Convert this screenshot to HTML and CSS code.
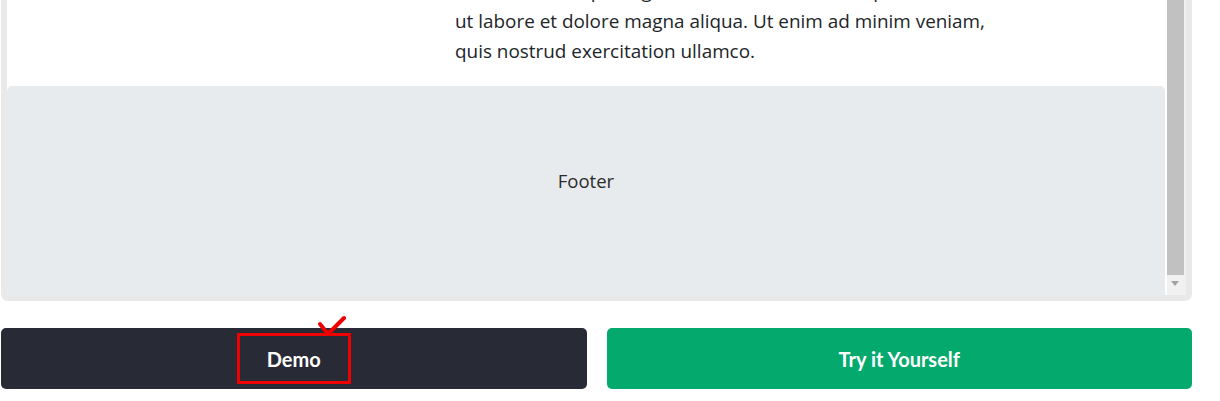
FILE: index.html
```html
<!DOCTYPE html>
<html lang="en">
<head>
<meta charset="utf-8">
<title>Demo</title>
<link rel="stylesheet" href="styles.css">
</head>
<body>
<div class="page">
  <div class="frame">
    <div class="viewport">
      <div class="doc">
        <p class="text">consectetur adipiscing elit, sed do eiusmod tempor incididunt<br>ut labore et dolore magna aliqua. Ut enim ad minim veniam,<br>quis nostrud exercitation ullamco.</p>
        <footer class="footer">Footer</footer>
      </div>
    </div>
    <div class="scrollbar">
      <div class="thumb"></div>
      <div class="arrow"></div>
    </div>
  </div>
  <div class="buttons">
    <a class="btn btn-dark">
      <span class="mark">Demo
        <svg class="check" width="28" height="22" viewBox="0 0 28 22"><polyline points="2,9 10,19 26,3" fill="none" stroke="#ee0000" stroke-width="4" stroke-linecap="round" stroke-linejoin="round"/></svg>
      </span>
    </a>
    <a class="btn btn-green">Try it Yourself</a>
  </div>
</div>
</body>
</html>
```
FILE: styles.css
```css
html, body {
  margin: 0;
  padding: 0;
  background: #ffffff;
}
.page {
  width: 1191px;
  padding-left: 1px;
}
.frame {
  display: flex;
  height: 301px;
  box-sizing: border-box;
  border: 6px solid #e9e9e9;
  border-top: 0;
  border-radius: 0 0 7px 7px;
  background: #ffffff;
  overflow: hidden;
}
.viewport {
  flex: 1;
  overflow: hidden;
  height: 295px;
}
.doc {
  margin-top: -24px;
}
.text {
  margin: 0 0 20px 0;
  padding-left: 448px;
  font-family: "Open Sans", "Noto Sans", sans-serif;
  font-size: 18.9px;
  line-height: 30px;
  color: #212529;
  white-space: nowrap;
}
.footer {
  margin-right: 2px;
  height: 240px;
  box-sizing: border-box;
  padding-top: 80px;
  background: #e8ebee;
  border-radius: 5px 5px 0 0;
  text-align: center;
  font-family: "Open Sans", "Noto Sans", sans-serif;
  font-size: 18.5px;
  line-height: 30px;
  color: #2b2b2b;
}
.scrollbar {
  width: 19px;
  height: 295px;
  background: #f1f1f1;
  display: flex;
  flex-direction: column;
}
.thumb {
  width: 17px;
  height: 275px;
  background: #c1c1c1;
}
.arrow {
  width: 0;
  height: 0;
  margin: 6px 0 0 4px;
  border-left: 4.5px solid transparent;
  border-right: 4.5px solid transparent;
  border-top: 5px solid #a3a3a3;
}
.buttons {
  display: flex;
  gap: 20px;
  margin-top: 27px;
}
.btn {
  flex: 1;
  height: 61px;
  border-radius: 5px;
  display: flex;
  align-items: center;
  justify-content: center;
  font-family: "Lato", "Open Sans", sans-serif;
  font-weight: 700;
  font-size: 20px;
  color: #ffffff;
  text-decoration: none;
}
.btn-dark {
  background: #282a35;
}
.btn-green {
  background: #04aa6d;
}
.mark {
  position: relative;
  width: 114px;
  height: 51px;
  box-sizing: border-box;
  border: 3px solid #ee0000;
  display: flex;
  align-items: center;
  justify-content: center;
}
.check {
  position: absolute;
  left: 78px;
  top: -21px;
}
```
